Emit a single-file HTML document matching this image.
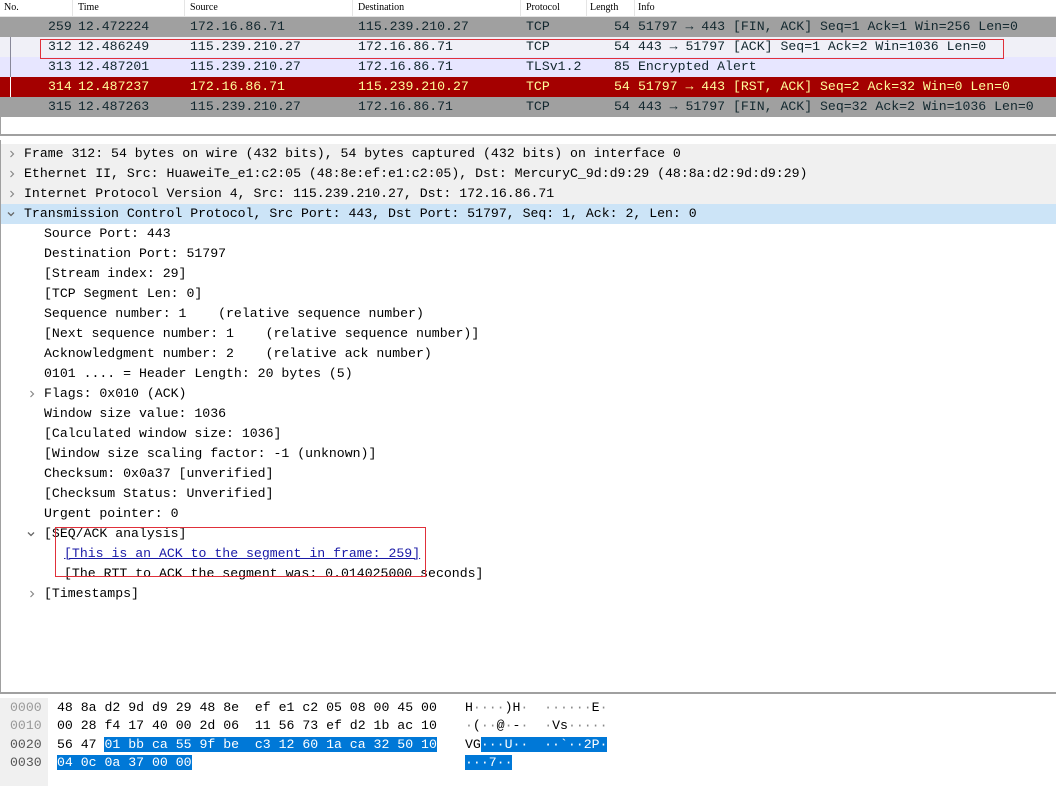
<!DOCTYPE html>
<html><head><meta charset="utf-8"><style>
*{margin:0;padding:0;box-sizing:border-box}
body{width:1056px;height:786px;overflow:hidden;background:#fff;font-family:"Liberation Mono","DejaVu Sans Mono",monospace;font-size:13.2px;color:#000;position:relative}
.a{position:absolute;white-space:pre}
.hdr{position:absolute;top:0;left:0;width:1056px;height:17px;background:#fff;border-bottom:1px solid #e5e5e5;font-size:10px;font-family:"Liberation Serif",serif}
.hdr span{position:absolute;top:2px}
.hdr i{position:absolute;top:0;width:1px;height:17px;background:#e5e5e5}
.row{position:absolute;left:0;width:1056px;height:20px;line-height:20px}
.row span{position:absolute}
.d{position:absolute;height:20px;line-height:20px;white-space:pre}
.arr{position:absolute;width:8px;height:8px}
.sel{background:#0078d7;color:#fff}
</style></head><body>
<div class="hdr">
<span style="left:4px">No.</span><span style="left:78px">Time</span><span style="left:190px">Source</span><span style="left:358px">Destination</span><span style="left:526px">Protocol</span><span style="left:590px">Length</span><span style="left:638px">Info</span>
<i style="left:72px"></i><i style="left:184px"></i><i style="left:352px"></i><i style="left:520px"></i><i style="left:586px"></i><i style="left:634px"></i>
</div>
<div class="row" style="top:17px;background:#a0a0a0;color:#12272e"><span style="left:48px">259</span><span style="left:78px">12.472224</span><span style="left:190px">172.16.86.71</span><span style="left:358px">115.239.210.27</span><span style="left:526px">TCP</span><span style="left:614px">54</span><span style="left:638px">51797 → 443 [FIN, ACK] Seq=1 Ack=1 Win=256 Len=0</span></div>
<div class="row" style="top:37px;background:#f0f0f7;color:#12272e"><span style="left:48px">312</span><span style="left:78px">12.486249</span><span style="left:190px">115.239.210.27</span><span style="left:358px">172.16.86.71</span><span style="left:526px">TCP</span><span style="left:614px">54</span><span style="left:638px">443 → 51797 [ACK] Seq=1 Ack=2 Win=1036 Len=0</span></div>
<div class="row" style="top:57px;background:#e7e6ff;color:#12272e"><span style="left:48px">313</span><span style="left:78px">12.487201</span><span style="left:190px">115.239.210.27</span><span style="left:358px">172.16.86.71</span><span style="left:526px">TLSv1.2</span><span style="left:614px">85</span><span style="left:638px">Encrypted Alert</span></div>
<div class="row" style="top:77px;background:#a40000;color:#fffc9c"><span style="left:48px">314</span><span style="left:78px">12.487237</span><span style="left:190px">172.16.86.71</span><span style="left:358px">115.239.210.27</span><span style="left:526px">TCP</span><span style="left:614px">54</span><span style="left:638px">51797 → 443 [RST, ACK] Seq=2 Ack=32 Win=0 Len=0</span></div>
<div class="row" style="top:97px;background:#a0a0a0;color:#12272e"><span style="left:48px">315</span><span style="left:78px">12.487263</span><span style="left:190px">115.239.210.27</span><span style="left:358px">172.16.86.71</span><span style="left:526px">TCP</span><span style="left:614px">54</span><span style="left:638px">443 → 51797 [FIN, ACK] Seq=32 Ack=2 Win=1036 Len=0</span></div>
<div class="a" style="left:10px;top:37px;width:1px;height:60px;background:#889"></div>
<div class="a" style="left:10px;top:77px;width:1px;height:20px;background:#fff"></div>
<div class="a" style="left:40px;top:39px;width:964px;height:20px;border:1px solid #e0303a"></div>
<div class="a" style="left:0;top:134px;width:1056px;height:2px;background:#a0a0a0"></div>
<div class="a" style="left:0;top:117px;width:1px;height:19px;background:#a0a0a0"></div>
<div class="a" style="left:0;top:140px;width:1px;height:553px;background:#a0a0a0"></div>
<div class="a" style="left:1px;top:144px;width:1055px;height:60px;background:#f0f0f0"></div>
<div class="a" style="left:1px;top:204px;width:1055px;height:20px;background:#cce4f7"></div>
<svg class="arr" style="left:8px;top:150px" viewBox="0 0 8 8"><path d="M2.5 1L5.5 4L2.5 7" fill="none" stroke="#888" stroke-width="1.2"/></svg>
<svg class="arr" style="left:8px;top:170px" viewBox="0 0 8 8"><path d="M2.5 1L5.5 4L2.5 7" fill="none" stroke="#888" stroke-width="1.2"/></svg>
<svg class="arr" style="left:8px;top:190px" viewBox="0 0 8 8"><path d="M2.5 1L5.5 4L2.5 7" fill="none" stroke="#888" stroke-width="1.2"/></svg>
<svg class="arr" style="left:7px;top:210px" viewBox="0 0 8 8"><path d="M1 2.5L4 5.5L7 2.5" fill="none" stroke="#666" stroke-width="1.3"/></svg>
<svg class="arr" style="left:28px;top:390px" viewBox="0 0 8 8"><path d="M2.5 1L5.5 4L2.5 7" fill="none" stroke="#888" stroke-width="1.2"/></svg>
<svg class="arr" style="left:27px;top:530px" viewBox="0 0 8 8"><path d="M1 2.5L4 5.5L7 2.5" fill="none" stroke="#666" stroke-width="1.3"/></svg>
<svg class="arr" style="left:28px;top:590px" viewBox="0 0 8 8"><path d="M2.5 1L5.5 4L2.5 7" fill="none" stroke="#888" stroke-width="1.2"/></svg>
<div class="d" style="left:24px;top:144px">Frame 312: 54 bytes on wire (432 bits), 54 bytes captured (432 bits) on interface 0</div>
<div class="d" style="left:24px;top:164px">Ethernet II, Src: HuaweiTe_e1:c2:05 (48:8e:ef:e1:c2:05), Dst: MercuryC_9d:d9:29 (48:8a:d2:9d:d9:29)</div>
<div class="d" style="left:24px;top:184px">Internet Protocol Version 4, Src: 115.239.210.27, Dst: 172.16.86.71</div>
<div class="d" style="left:24px;top:204px">Transmission Control Protocol, Src Port: 443, Dst Port: 51797, Seq: 1, Ack: 2, Len: 0</div>
<div class="d" style="left:44px;top:224px">Source Port: 443</div>
<div class="d" style="left:44px;top:244px">Destination Port: 51797</div>
<div class="d" style="left:44px;top:264px">[Stream index: 29]</div>
<div class="d" style="left:44px;top:284px">[TCP Segment Len: 0]</div>
<div class="d" style="left:44px;top:304px">Sequence number: 1    (relative sequence number)</div>
<div class="d" style="left:44px;top:324px">[Next sequence number: 1    (relative sequence number)]</div>
<div class="d" style="left:44px;top:344px">Acknowledgment number: 2    (relative ack number)</div>
<div class="d" style="left:44px;top:364px">0101 .... = Header Length: 20 bytes (5)</div>
<div class="d" style="left:44px;top:384px">Flags: 0x010 (ACK)</div>
<div class="d" style="left:44px;top:404px">Window size value: 1036</div>
<div class="d" style="left:44px;top:424px">[Calculated window size: 1036]</div>
<div class="d" style="left:44px;top:444px">[Window size scaling factor: -1 (unknown)]</div>
<div class="d" style="left:44px;top:464px">Checksum: 0x0a37 [unverified]</div>
<div class="d" style="left:44px;top:484px">[Checksum Status: Unverified]</div>
<div class="d" style="left:44px;top:504px">Urgent pointer: 0</div>
<div class="d" style="left:44px;top:524px">[SEQ/ACK analysis]</div>
<div class="d" style="left:64px;top:544px;color:#1a1aa6;text-decoration:underline">[This is an ACK to the segment in frame: 259]</div>
<div class="d" style="left:64px;top:564px">[The RTT to ACK the segment was: 0.014025000 seconds]</div>
<div class="d" style="left:44px;top:584px">[Timestamps]</div>
<div class="a" style="left:55px;top:527px;width:371px;height:50px;border:1px solid #e0303a"></div>
<div class="a" style="left:0;top:692px;width:1056px;height:2px;background:#a0a0a0"></div>
<div class="a" style="left:0;top:698px;width:48px;height:88px;background:#f0f0f0"></div>
<div class="d" style="left:10px;top:699px;height:18px;line-height:18px;color:#999">0000</div>
<div class="d" style="left:10px;top:717px;height:18px;line-height:18px;color:#999">0010</div>
<div class="d" style="left:10px;top:736px;height:18px;line-height:18px;color:#555">0020</div>
<div class="d" style="left:10px;top:754px;height:18px;line-height:18px;color:#555">0030</div>
<div class="d" style="left:57px;top:699px;height:18px;line-height:18px">48 8a d2 9d d9 29 48 8e  ef e1 c2 05 08 00 45 00</div>
<div class="d" style="left:57px;top:717px;height:18px;line-height:18px">00 28 f4 17 40 00 2d 06  11 56 73 ef d2 1b ac 10</div>
<div class="d" style="left:57px;top:736px;height:18px;line-height:18px">56 47 <span class="sel">01 bb ca 55 9f be  c3 12 60 1a ca 32 50 10</span></div>
<div class="d" style="left:57px;top:754px;height:18px;line-height:18px"><span class="sel">04 0c 0a 37 00 00</span></div>
<div class="d" style="left:465px;top:699px;height:18px;line-height:18px">H<span style="color:#888">····</span>)H<span style="color:#888">·</span>  <span style="color:#888">······</span>E<span style="color:#888">·</span></div>
<div class="d" style="left:465px;top:717px;height:18px;line-height:18px"><span style="color:#888">·</span>(<span style="color:#888">··</span>@<span style="color:#888">·</span>-<span style="color:#888">·</span>  <span style="color:#888">·</span>Vs<span style="color:#888">·····</span></div>
<div class="d" style="left:465px;top:736px;height:18px;line-height:18px">VG<span class="sel">···U··  ··`··2P·</span></div>
<div class="d" style="left:465px;top:754px;height:18px;line-height:18px"><span class="sel">···7··</span></div>
</body></html>
